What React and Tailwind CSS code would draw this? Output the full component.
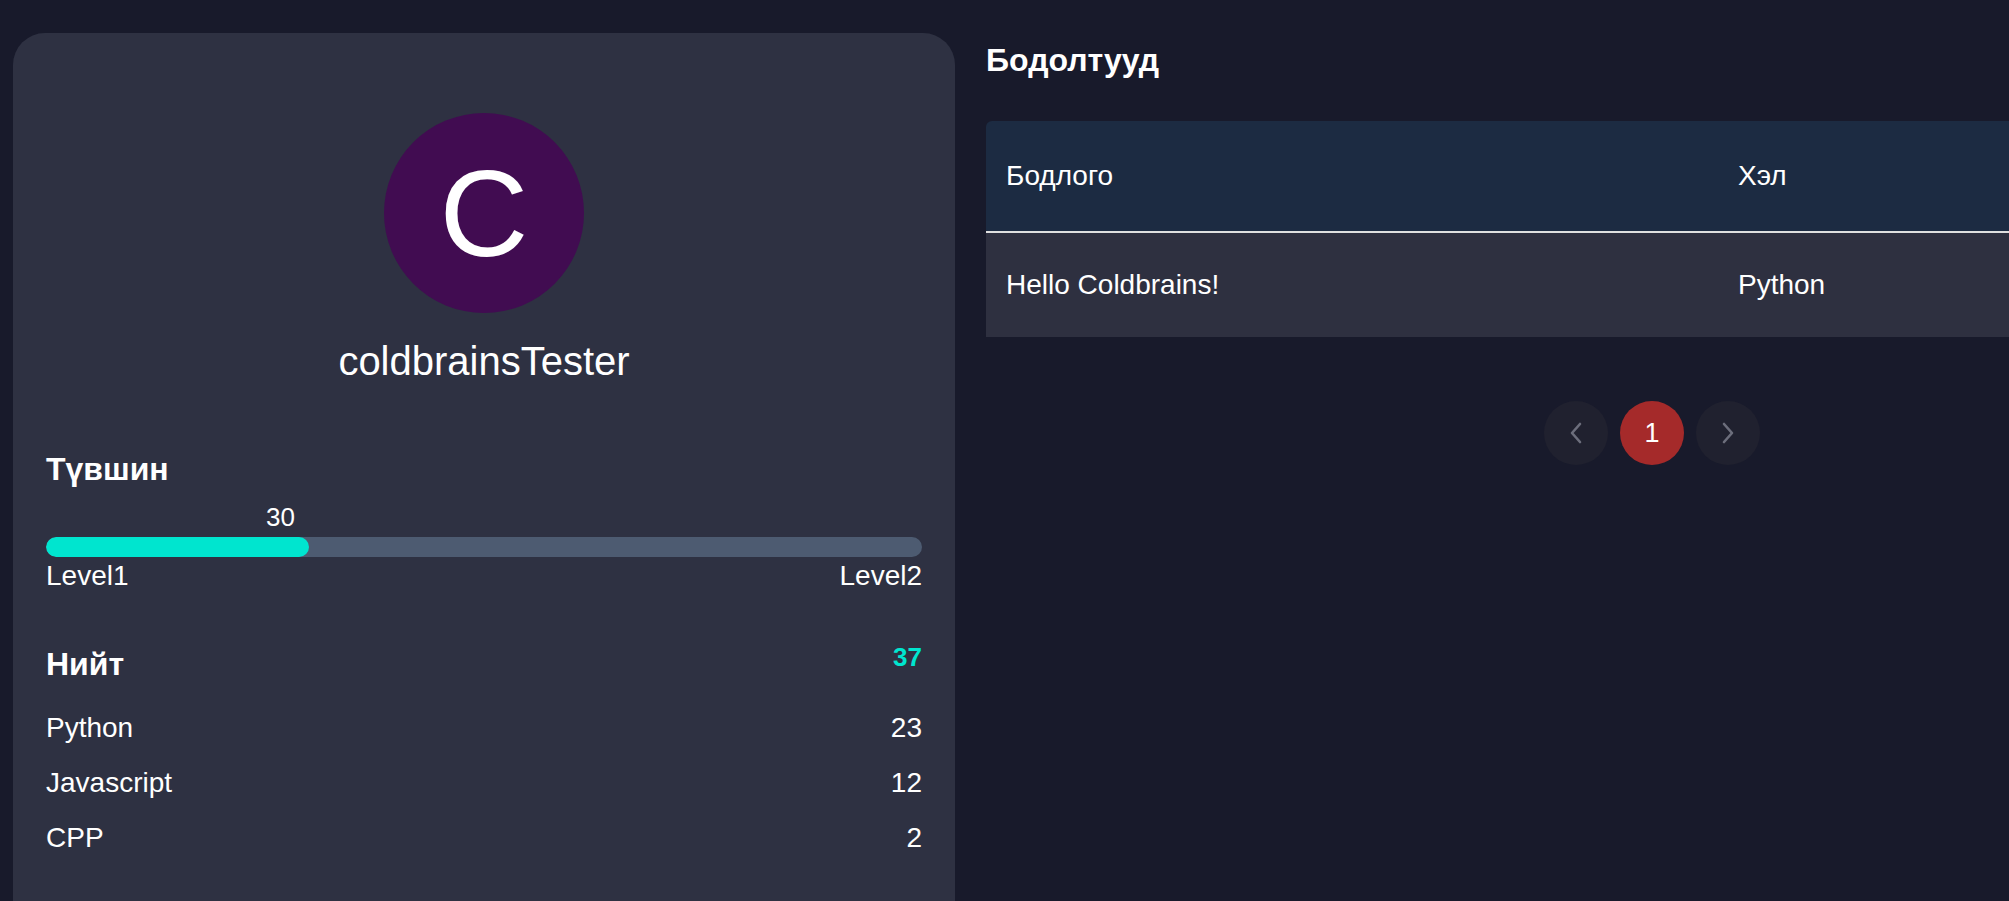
import React from 'react';

const stats = [
  { lang: 'Python', count: 23 },
  { lang: 'Javascript', count: 12 },
  { lang: 'CPP', count: 2 },
];

const rows = [{ title: 'Hello Coldbrains!', lang: 'Python' }];

function Chevron({ dir }) {
  return (
    <svg width="14" height="22" viewBox="0 0 14 22" fill="none">
      <polyline
        points={dir === 'left' ? '11,2 3,11 11,20' : '3,2 11,11 3,20'}
        stroke="#6c6e7c"
        strokeWidth="2.6"
        strokeLinecap="round"
        strokeLinejoin="round"
      />
    </svg>
  );
}

export default function App() {
  const level = 30;

  return (
    <div
      className="h-screen w-screen overflow-hidden bg-[#181a2b] text-white flex gap-[31px] pl-[13px] pt-[33px]"
      style={{ fontFamily: '"Liberation Sans", Arial, sans-serif' }}
    >
      {/* Profile card */}
      <div className="w-[942px] shrink-0 min-h-[900px] rounded-[32px] bg-[#2e3142] px-[33px] pt-[80px] flex flex-col">
        <div className="self-center w-[200px] h-[200px] rounded-full bg-[#410c51] flex items-center justify-center text-[123px] leading-none">
          C
        </div>
        <p className="self-center mt-[25px] text-[40px] leading-[46px]">coldbrainsTester</p>

        <p className="mt-[67px] text-[32px] leading-[37px] font-bold">Түвшин</p>
        <div className="mt-[14px] text-[26px] leading-[30px] pl-[220px]">{level}</div>
        <div className="mt-[5px] h-[20px] rounded-full bg-[#4d5b71] overflow-hidden">
          <div className="h-full rounded-full bg-[#00e5cf]" style={{ width: `${level}%` }} />
        </div>
        <div className="mt-[3px] flex justify-between text-[28px] leading-[32px]">
          <span>Level1</span>
          <span>Level2</span>
        </div>

        <div className="mt-[50px] flex justify-between items-start">
          <span className="mt-[4px] text-[32px] leading-[37px] font-bold">Нийт</span>
          <span className="text-[26px] leading-[30px] font-bold text-[#00e5cf]">37</span>
        </div>
        <div className="mt-[29px] flex flex-col gap-[23px]">
          {stats.map((s) => (
            <div key={s.lang} className="flex justify-between text-[28px] leading-[32px]">
              <span>{s.lang}</span>
              <span>{s.count}</span>
            </div>
          ))}
        </div>
      </div>

      {/* Submissions */}
      <div className="w-[1332px] shrink-0 pt-[9px]">
        <h2 className="text-[32px] leading-[37px] font-bold">Бодолтууд</h2>

        <div className="mt-[42px] rounded-t-[6px] overflow-hidden">
          <div className="flex h-[112px] items-center bg-[#1c2b42] border-b-2 border-[#e0e0e0] text-[28px]">
            <div className="w-[732px] pl-[20px]">Бодлого</div>
            <div className="pl-[20px]">Хэл</div>
          </div>
          {rows.map((r) => (
            <div key={r.title} className="flex h-[104px] items-center bg-[#2e3040] text-[28px]">
              <div className="w-[732px] pl-[20px]">{r.title}</div>
              <div className="pl-[20px]">{r.lang}</div>
            </div>
          ))}
        </div>

        <div className="mt-[64px] flex justify-center gap-[12px]">
          <button className="w-[64px] h-[64px] rounded-full bg-[#20212f] flex items-center justify-center">
            <Chevron dir="left" />
          </button>
          <button className="w-[64px] h-[64px] rounded-full bg-[#a52a2a] flex items-center justify-center text-[27px] text-white">
            1
          </button>
          <button className="w-[64px] h-[64px] rounded-full bg-[#20212f] flex items-center justify-center">
            <Chevron dir="right" />
          </button>
        </div>
      </div>
    </div>
  );
}
